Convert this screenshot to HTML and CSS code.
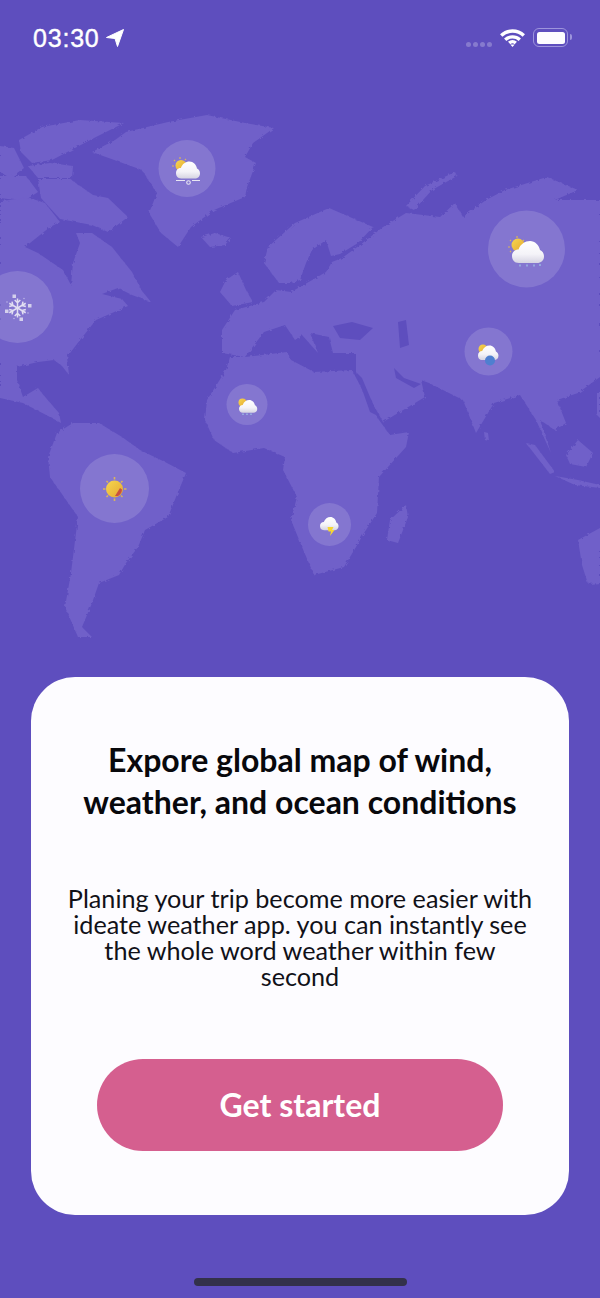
FILE: index.html
```html
<!DOCTYPE html>
<html lang="en">
<head>
<meta charset="utf-8">
<title>Explore global map</title>
<link rel="stylesheet" href="styles.css">
</head>
<body>
<main class="screen">
  <svg class="map" viewBox="0 0 600 660" width="600" height="660" aria-hidden="true">
    <defs>
      <filter id="rough" x="-5%" y="-5%" width="110%" height="110%">
        <feTurbulence type="fractalNoise" baseFrequency="0.3" numOctaves="2" seed="4" result="n"/>
        <feDisplacementMap in="SourceGraphic" in2="n" scale="3.500"/>
      </filter>
      <linearGradient id="cloudFill" x1="0" y1="0" x2="0" y2="1">
        <stop offset="0" stop-color="#ffffff"/>
        <stop offset=".6" stop-color="#f4f3f8"/>
        <stop offset="1" stop-color="#d6d4e2"/>
      </linearGradient>
      <linearGradient id="sunFill" x1="0" y1="0" x2="1" y2="1">
        <stop offset="0" stop-color="#f6d650"/>
        <stop offset="1" stop-color="#e5a82e"/>
      </linearGradient>
      <path id="cloud" d="M7 22C2 22 0 18.500 0 15C0 11 3 8.500 6.500 8.500C8.500 3 13 0 18 0C23 0 27 4 28 9C30.500 10 32 12.500 32 15.500C32 19.500 29 22 25 22Z"/>
      <path id="arm" d="M0 0v-9.500M-2.800 -8l2.800 2.800 2.800-2.800"/>
    </defs>

    <g class="land" filter="url(#rough)">
      <polygon points="92,152 115,140 126,132 168,122 207,115 245,123 274,128 253,143 245,157 256,163 247,187 245,197 214,210 191,227 178,247 161,233 149,213 157,193 142,170"/>
      <polygon points="201,237 215,233 231,238 225,245 210,247"/>
      <polygon points="19,140 42,127 80,120 124,123 96,137 75,148 52,160 32,163 21,152"/>
      <polygon points="28,166 50,163 73,166 72,178 38,178"/>
      <polygon points="0,146 14,148 24,168 10,178 0,172"/>
      <polygon points="0,176 26,176 38,192 24,201 0,198"/>
      <polygon points="38,179 70,179 93,195 108,198 128,217 108,232 92,225 60,219 41,198"/>
      <polygon points="0,201 30,198 45,203 60,222 50,227 25,247 38,253 63,270 71,285 73,263 80,243 76,233 92,233 112,247 132,272 142,291 151,302 132,295 118,288 102,294 122,299 128,306 96,320 80,340 67,357 69,375 62,366 54,360 38,362 17,367 17,380 23,397 38,388 46,398 59,413 61,423 50,417 23,403 0,398"/>
      <polygon points="57,433 73,423 99,423 122,437 140,450 165,462 186,473 176,497 168,517 145,530 138,547 126,563 119,575 99,583 92,603 82,627 92,637 78,637 65,607 71,573 78,517 50,477 48,457"/>
      <polygon points="230,357 245,357 287,352 291,360 314,372 352,370 365,395 379,420 390,435 409,432 406,447 379,477 377,513 364,533 356,547 344,567 314,575 302,547 291,520 297,497 283,470 285,457 264,448 233,453 214,440 205,420 207,400 226,370"/>
      <polygon points="387,540 390,520 406,505 408,517 398,543"/>
      <polygon points="264,263 268,247 295,223 329,208 373,227 358,243 340,254 331,256 326,240 312,250 306,263 300,280 291,283 279,283"/>
      <polygon points="222,353 222,330 235,310 264,302 276,290 291,292 314,279 326,272 332,262 342,258 360,245 383,227 406,213 440,217 455,203 463,217 486,200 505,190 547,177 578,190 555,200 600,200 600,377 578,393 557,400 566,423 555,430 540,420 551,453 536,420 520,395 494,403 476,433 463,400 429,383 421,380 425,397 383,422 356,373 356,353 333,353 329,337 310,333 318,353 302,335 295,340 285,325 264,332 245,357"/>
      <polygon points="406,206 425,186 455,172 457,176 432,190 414,210"/>
      <polygon points="220,292 226,280 238,272 246,290 253,302 232,306"/>
      <polygon points="526,443 535,445 555,472 550,474"/>
      <polygon points="555,476 578,480 600,485 600,488 575,485"/>
      <polygon points="566,455 578,440 593,453 586,467 570,464"/>
      <polygon points="484,432 488,433 489,441 485,440"/>
      <polygon points="597,393 600,390 600,418 597,415"/>
      <polygon points="578,540 600,528 600,583 588,584 582,565"/>
    </g>
    <g class="sea">
      <polygon points="333,326 352,322 373,328 360,340 340,338"/>
      <polygon points="398,322 406,320 409,345 400,348"/>
      <polygon points="394,368 404,378 421,384 414,388 396,378"/>
      <polygon points="356,372 362,378 378,416 370,412"/>
    </g>

    <g class="pins">
      <circle cx="187" cy="168.500" r="28.500"/>
      <circle cx="526.500" cy="249" r="38.500"/>
      <circle cx="17.500" cy="307" r="36"/>
      <circle cx="488.500" cy="351.500" r="24"/>
      <circle cx="247" cy="404.500" r="20.500"/>
      <circle cx="114.500" cy="488.500" r="34.500"/>
      <circle cx="329.500" cy="524.500" r="21.500"/>
    </g>

    <!-- Greenland: sun, cloud, wind -->
    <g>
      <g class="rays"><path d="M174 160l1 1M180 157v2M186 159l-1 1M172 166h2"/></g>
      <circle class="sun" cx="181" cy="165.500" r="5.500"/>
      <use href="#cloud" transform="translate(176 161.500) scale(.75 .77)"/>
      <path class="wind" d="M176 180.500h9M192 180.500h8"/>
      <circle class="wind" cx="188.500" cy="182.500" r="1.800"/>
    </g>

    <!-- Asia: sun, cloud, drops -->
    <g>
      <g class="rays"><path d="M510 240l1 1M517 236v2M524 240l-1 1M508 247h2M510 252l1 -1"/></g>
      <circle class="sun" cx="518" cy="245" r="6.500"/>
      <use href="#cloud" transform="translate(512 241) scale(1 1)"/>
      <path class="drops" d="M520 264.500v2M527 264.500v2M534 264.500v2M540 264v2"/>
    </g>

    <!-- Snowflake -->
    <g class="flake">
      <g transform="translate(17.500 308)">
        <use href="#arm"/>
        <use href="#arm" transform="rotate(60)"/>
        <use href="#arm" transform="rotate(120)"/>
        <use href="#arm" transform="rotate(180)"/>
        <use href="#arm" transform="rotate(240)"/>
        <use href="#arm" transform="rotate(300)"/>
      </g>
      <rect x="12.500" y="294.500" width="3.500" height="3.500"/>
      <rect x="28" y="304" width="3.500" height="3.500"/>
      <rect x="5" y="309.500" width="3.500" height="3.500"/>
      <rect x="19.500" y="317.500" width="3.500" height="3.500"/>
      <circle cx="7" cy="302" r=".8"/>
      <circle cx="24" cy="298.500" r=".8"/>
      <circle cx="28" cy="313" r=".8"/>
      <circle cx="14" cy="318.500" r=".8"/>
    </g>

    <!-- India: sun, cloud, snow -->
    <g>
      <circle class="sun" cx="483" cy="349" r="4.500"/>
      <use href="#cloud" transform="translate(478 345.500) scale(.64 .66)"/>
      <circle class="icy" cx="490" cy="360.500" r="5"/>
    </g>

    <!-- West Africa: sun, cloud, drops -->
    <g>
      <circle class="sun" cx="242.500" cy="402.500" r="4"/>
      <use href="#cloud" transform="translate(239 400) scale(.57 .58)"/>
      <path class="drops" d="M243 413.500v1.500M247 413.500v1.500M251 413.500v1.500"/>
    </g>

    <!-- Sun -->
    <g>
      <g class="rays sunrays"><path d="M114.500 477v2.500M114.500 498.500v2.500M103 489h2.500M124 489h2.500M106.500 481l1.500 1.500M122.500 481l-1.500 1.500M106.500 497l1.500-1.500M122.500 497l-1.500-1.500"/></g>
      <circle class="sun" cx="114.500" cy="489" r="8.500"/>
      <path class="heat" d="M115 496l5-8 2 1.500a8 8 0 0 1-4 6.500z"/>
    </g>

    <!-- Thunder -->
    <g>
      <use href="#cloud" transform="translate(320 517) scale(.58 .6)"/>
      <path class="bolt" d="M327.500 527h6l-1.500 3h2.500l-4.500 6 1-4.500h-2.500z"/>
    </g>
  </svg>

  <header class="status">
    <div class="status-left">
      <span class="time">03:30</span>
      <svg class="arrow" viewBox="0 0 18 18" width="18" height="18" aria-hidden="true"><path d="M.5 8.500L17.500 .5 11.500 17.500 9 9.500z"/></svg>
    </div>
    <div class="status-right">
      <span class="signal"><i></i><i></i><i></i><i></i></span>
      <svg class="wifi" viewBox="0 0 25 19" width="25" height="19" aria-hidden="true">
        <path d="M1.200 7.500a16.500 16.500 0 0 1 22.600 0M5.200 11.700a10.800 10.800 0 0 1 14.600 0"/>
        <path d="M9.200 15a5 5 0 0 1 6.600 0"/>
        <path class="wifi-dot" d="M12.500 19l-2.200-2.600h4.400z"/>
      </svg>
      <span class="battery"><span class="battery-level"></span></span>
    </div>
  </header>

  <section class="card">
    <h1 class="title">Expore global map of wind, weather, and ocean conditions</h1>
    <p class="body">Planing your trip become more easier with ideate weather app. you can instantly see the whole word weather within few second</p>
    <a class="cta">Get started</a>
  </section>

  <div class="home"></div>
</main>
</body>
</html>
```

FILE: styles.css
```css
* { box-sizing: border-box; }
html, body { margin: 0; padding: 0; }
body { background: #5e4ebe; font-family: "Lato", "Noto Sans", sans-serif; }

.screen {
  position: relative;
  width: 600px;
  height: 1298px;
  overflow: hidden;
  display: flex;
  flex-direction: column;
  background: #5e4ebe;
}

.map { position: absolute; left: 0; top: 0; display: block; }
.land polygon { fill: #7060c9; }
.sea polygon { fill: #5e4ebe; }
.pins circle { fill: rgba(255, 255, 255, 0.14); }
.map > g > use { fill: url(#cloudFill); }
.sun { fill: url(#sunFill); }
.rays path { stroke: #d9b45c; stroke-width: 1.2; fill: none; }
.sunrays path { stroke-width: 1.6; }
.wind { stroke: #e8e6f2; stroke-width: 1.1; fill: none; }
.drops { stroke: #9fc0e6; stroke-width: 1.3; fill: none; }
.flake use { fill: none; stroke: #e2dff2; stroke-width: 1.5; }
.flake rect { fill: #d4d0ec; }
.flake circle { fill: #b9b2e6; }
.icy { fill: #4f7fd0; }
.heat { fill: #c9503f; }
.bolt { fill: #f7d631; }

.status {
  position: relative;
  height: 76px;
  padding: 22px 32px 0 33px;
  display: flex;
  justify-content: space-between;
  align-items: flex-start;
  color: #fff;
}
.status-left { display: flex; align-items: center; gap: 6px; }
.time {
  font-family: "Liberation Sans", Arial, sans-serif;
  font-size: 25px;
  line-height: 32px;
  letter-spacing: 0.800px;
  -webkit-text-stroke: 0.400px #fff;
}
.arrow { fill: #fff; stroke: #fff; stroke-width: 1; stroke-linejoin: round; }
.status-right { display: flex; align-items: flex-start; padding-top: 6px; }
.signal { display: flex; gap: 2px; margin: 14px 8px 0 0; }
.signal i { width: 5px; height: 5px; border-radius: 50%; background: rgba(255, 255, 255, 0.25); }
.wifi { fill: none; stroke: #fff; stroke-width: 3.400; margin-right: 8px; }
.wifi-dot { fill: #fff; stroke: none; }
.battery {
  position: relative;
  width: 35px;
  height: 19px;
  padding: 2.500px;
  border: 1.500px solid #9d94dc;
  border-radius: 6px;
}
.battery::after {
  content: "";
  position: absolute;
  right: -5px;
  top: 5px;
  width: 2px;
  height: 6px;
  border-radius: 0 2px 2px 0;
  background: #9d94dc;
}
.battery-level { display: block; height: 100%; border-radius: 2.500px; background: #fdfcff; }

.card {
  position: relative;
  margin: 601px 31px 0;
  height: 538px;
  padding: 62px 0 0;
  border-radius: 44px;
  background: #fdfcff;
  display: flex;
  flex-direction: column;
  align-items: center;
  text-align: center;
}
.title {
  margin: 0;
  width: 445px;
  color: #08080c;
  font-size: 32px;
  line-height: 42px;
  font-weight: 700;
}
.body {
  margin: 62px 0 0;
  width: 470px;
  color: #111118;
  font-size: 25.200px;
  line-height: 26px;
  font-weight: 400;
}
.cta {
  margin-top: 70px;
  width: 406px;
  height: 92px;
  border-radius: 46px;
  background: #d55f8f;
  color: #fff;
  font-size: 32px;
  font-weight: 700;
  line-height: 92px;
}

.home {
  position: absolute;
  left: 194px;
  bottom: 12px;
  width: 213px;
  height: 8px;
  border-radius: 4px;
  background: #33314a;
}
```
